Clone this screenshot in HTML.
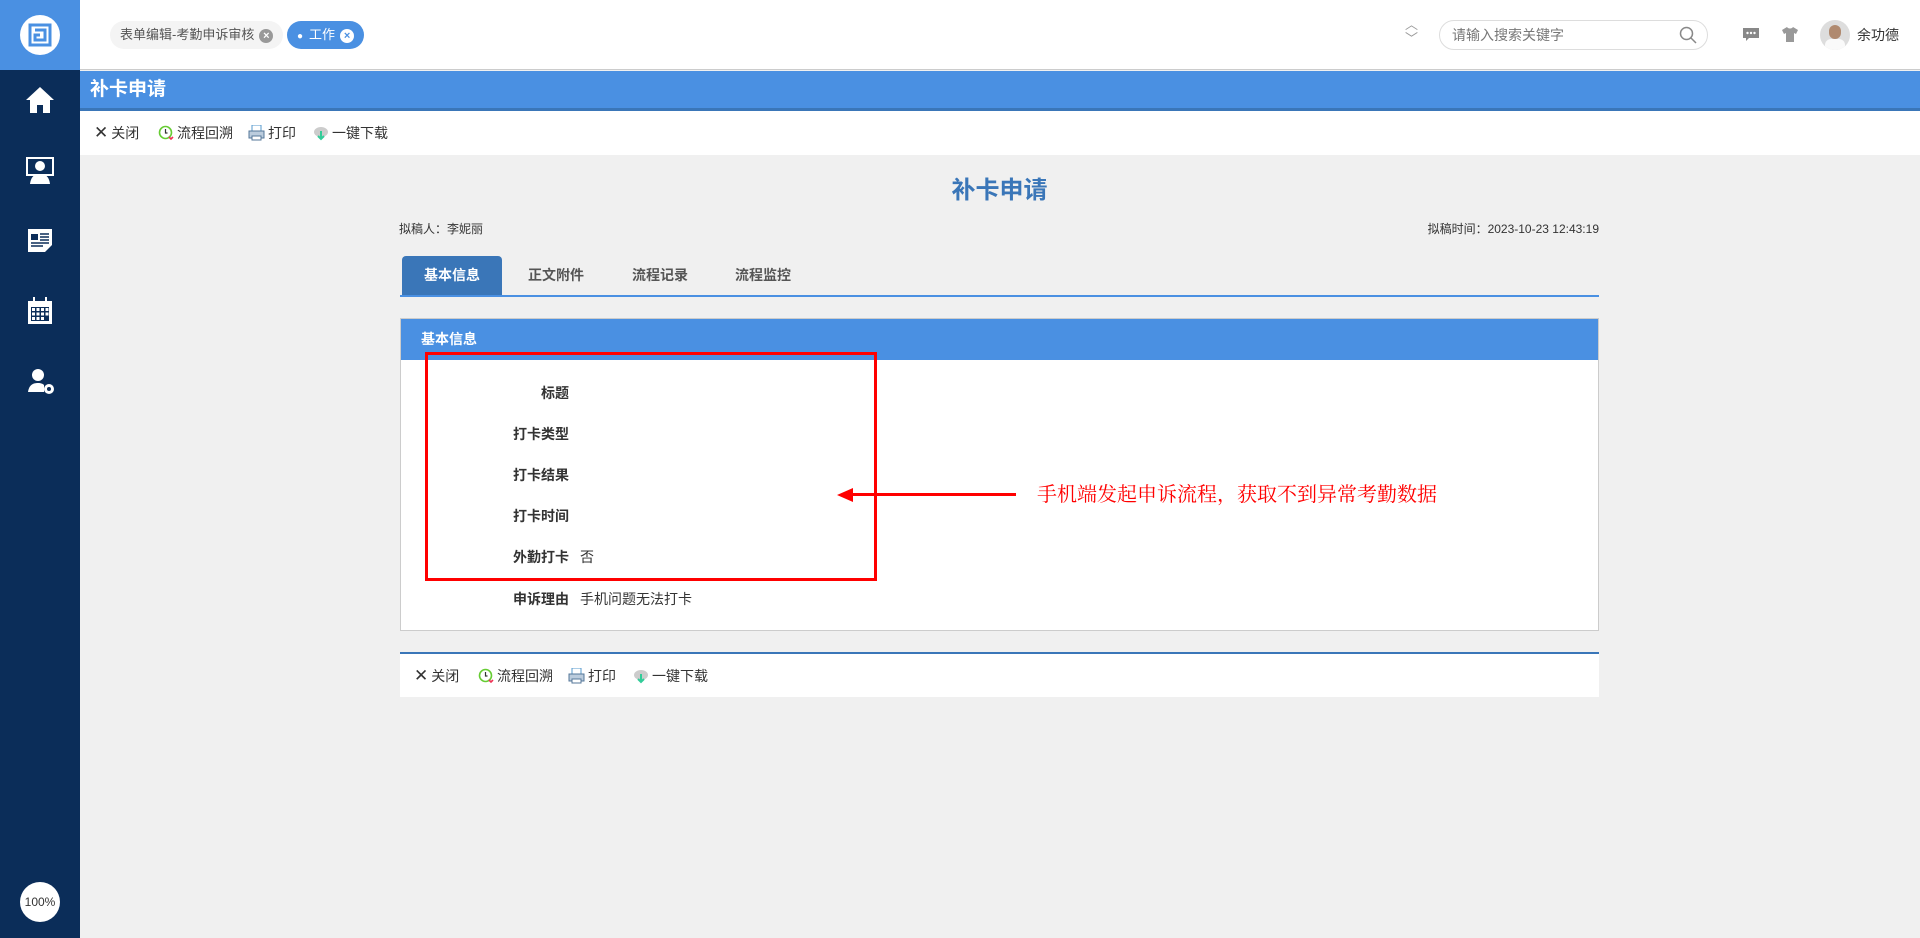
<!DOCTYPE html>
<html><head><meta charset="utf-8"><style>
*{box-sizing:border-box;margin:0;padding:0}
body{width:1920px;height:938px;overflow:hidden;background:#f0f0f0;font-family:"Liberation Sans","Noto Sans CJK SC",sans-serif;color:#333;position:relative}
.abs{position:absolute}
#side{left:0;top:0;width:80px;height:938px;background:#0b2d59}
#logo{left:0;top:0;width:80px;height:70px;background:#4a90e2}
#top{left:80px;top:0;width:1840px;height:70px;background:#fff;border-bottom:1px solid #ccc}
.chip{position:absolute;top:21px;height:28px;border-radius:14px;font-size:13px;line-height:28px;padding:0 10px;white-space:nowrap}
.x{display:inline-block;width:14px;height:14px;border-radius:7px;font-size:11px;line-height:14px;text-align:center;vertical-align:middle;margin-left:5px;font-weight:bold}
#bar{left:80px;top:71px;width:1840px;height:40px;background:#4a90e2;border-bottom:3px solid #3a76b8;color:#fff;font-weight:bold;font-size:19px;line-height:38px;padding-left:10px}
#tb{left:80px;top:111px;width:1840px;height:44px;background:#fff}
.tool{position:absolute;font-size:14px;line-height:20px;display:flex;align-items:center;gap:3px}
</style></head><body>
<div id="side" class="abs"></div>
<div id="logo" class="abs"><div class="abs" style="left:20px;top:15px;width:40px;height:40px;border-radius:20px;background:#fff"></div>
<svg class="abs" style="left:27px;top:22px" width="26" height="26" viewBox="0 0 26 26" fill="none" stroke="#4a90e2" stroke-width="3"><path d="M3 3h20v20H3z M8 8h10v10H8v-5h5"/></svg></div>
<svg class="abs" style="left:25px;top:86px" width="30" height="28" viewBox="0 0 30 28" fill="#fff"><path d="M15 1L1 14h4v13h7v-8h6v8h7V14h4z"/></svg>
<svg class="abs" style="left:26px;top:157px" width="28" height="27" viewBox="0 0 28 27" fill="#fff"><rect x="1" y="1" width="26" height="17" fill="none" stroke="#fff" stroke-width="2"/><circle cx="14" cy="9" r="5"/><path d="M4 27c1-8 5-10 10-10s9 2 10 10z"/></svg>
<svg class="abs" style="left:27px;top:227px" width="26" height="26" viewBox="0 0 26 26" fill="#fff"><path d="M1 2h24v16l-7 7H1z"/><rect x="4" y="7" width="7" height="6" fill="#0b2d59"/><path d="M13 7h9M13 10h9M13 13h9M4 16h18M4 19h12" stroke="#0b2d59" stroke-width="1.5"/></svg>
<svg class="abs" style="left:27px;top:297px" width="26" height="27" viewBox="0 0 26 27" fill="#fff"><path d="M1 4h24v23H1z"/><rect x="6" y="0" width="2" height="6"/><rect x="18" y="0" width="2" height="6"/><g fill="#0b2d59"><rect x="4" y="10" width="18" height="14"/></g><g fill="#fff"><rect x="5" y="11" width="3" height="3"/><rect x="9.5" y="11" width="3" height="3"/><rect x="14" y="11" width="3" height="3"/><rect x="18.5" y="11" width="3" height="3"/><rect x="5" y="15.5" width="3" height="3"/><rect x="9.5" y="15.5" width="3" height="3"/><rect x="14" y="15.5" width="3" height="3"/><rect x="18.5" y="15.5" width="3" height="3"/><rect x="5" y="20" width="3" height="3"/><rect x="9.5" y="20" width="3" height="3"/><rect x="14" y="20" width="3" height="3"/></g></svg>
<svg class="abs" style="left:28px;top:368px" width="28" height="28" viewBox="0 0 28 28" fill="#fff"><circle cx="10" cy="7" r="6"/><path d="M0 24c1-7 5-9 10-9 3 0 5 1 6 2v7z"/><circle cx="21" cy="21" r="5"/><circle cx="21" cy="21" r="2" fill="#0b2d59"/></svg>
<div class="abs" style="left:20px;top:882px;width:40px;height:40px;border-radius:20px;background:#fff;font-size:12px;line-height:40px;text-align:center;color:#333">100%</div>

<div id="top" class="abs">
<div class="chip" style="left:30px;background:#f4f4f4;color:#555">表单编辑-考勤申诉审核<span class="x" style="background:#999;color:#fff">×</span></div>
<div class="chip" style="left:207px;background:#4a90e2;color:#fff"><span style="font-size:10px;margin-right:6px">●</span>工作<span class="x" style="background:#fff;color:#4a90e2">×</span></div>
<div class="abs" style="left:1325px;top:18px;color:#999;font-size:13px;line-height:14px;text-align:center">︿<br>﹀</div>
<div class="abs" style="left:1359px;top:20px;width:269px;height:30px;border:1px solid #ddd;border-radius:15px;font-size:14px;line-height:28px;padding-left:12px;color:#777">请输入搜索关键字
<svg class="abs" style="right:10px;top:5px" width="18" height="18" viewBox="0 0 18 18" fill="none" stroke="#888" stroke-width="1.5"><circle cx="7.5" cy="7.5" r="6"/><path d="M12 12l5 5"/></svg></div>
<svg class="abs" style="left:1663px;top:28px" width="16" height="13" viewBox="0 0 16 13" fill="#888"><path d="M0 0h16v10H6l-3 3v-3H0z"/><g fill="#fff"><circle cx="4.5" cy="5" r="1.2"/><circle cx="8" cy="5" r="1.2"/><circle cx="11.5" cy="5" r="1.2"/></g></svg>
<svg class="abs" style="left:1702px;top:27px" width="16" height="15" viewBox="0 0 16 15" fill="#999"><path d="M5 0L0 3l2 4 2-1v9h8V6l2 1 2-4-5-3c-1 2-5 2-6 0z"/></svg>
<div class="abs" style="left:1740px;top:20px;width:30px;height:30px;border-radius:15px;background:#ddd;overflow:hidden"><div class="abs" style="left:9px;top:5px;width:12px;height:14px;border-radius:6px;background:#b08a70"></div><div class="abs" style="left:5px;top:19px;width:20px;height:14px;border-radius:6px;background:#fafafa"></div></div>
<div class="abs" style="left:1777px;top:25px;font-size:14px;color:#333">余功德</div>
</div>

<div id="bar" class="abs">补卡申请</div>
<div id="tb" class="abs">
<div class="tool" style="left:14px;top:12px"><span style="font-size:17px">✕</span>关闭</div>
<div class="tool" style="left:78px;top:12px"><svg width="16" height="16" viewBox="0 0 16 16" fill="none"><circle cx="7.5" cy="7.5" r="6" stroke="#6c3" stroke-width="1.6"/><path d="M7.5 4v4h2" stroke="#333" stroke-width="1.2"/><path d="M11 12l2 2 2-2" stroke="#e35" stroke-width="1.6"/></svg>流程回溯</div>
<div class="tool" style="left:168px;top:12px"><svg width="17" height="16" viewBox="0 0 17 16"><rect x="4" y="0" width="9" height="7" fill="#fff" stroke="#59c"/><rect x="1" y="6" width="15" height="7" fill="#bcd" stroke="#579"/><rect x="4" y="11" width="9" height="4" fill="#fff" stroke="#579"/></svg>打印</div>
<div class="tool" style="left:233px;top:12px"><svg width="16" height="16" viewBox="0 0 16 16"><ellipse cx="8" cy="7" rx="7" ry="5" fill="#ccc"/><path d="M8 6v8M5 11l3 3 3-3" stroke="#3c9" stroke-width="2" fill="none"/></svg>一键下载</div>
</div>

<div class="abs" style="left:400px;top:170px;width:1199px;text-align:center;font-size:24px;font-weight:bold;color:#3a76b8">补卡申请</div>
<div class="abs" style="left:399px;top:220px;font-size:12px">拟稿人：李妮丽</div>
<div class="abs" style="left:1399px;top:220px;width:200px;text-align:right;font-size:12px">拟稿时间：2023-10-23 12:43:19</div>

<div class="abs" style="left:402px;top:256px;width:100px;height:39px;background:#3a76b8;border-radius:4px 4px 0 0;color:#fff;font-weight:bold;font-size:14px;line-height:39px;text-align:center">基本信息</div>
<div class="abs" style="left:528px;top:256px;font-size:14px;line-height:39px;color:#555;font-weight:bold">正文附件</div>
<div class="abs" style="left:632px;top:256px;font-size:14px;line-height:39px;color:#555;font-weight:bold">流程记录</div>
<div class="abs" style="left:735px;top:256px;font-size:14px;line-height:39px;color:#555;font-weight:bold">流程监控</div>
<div class="abs" style="left:400px;top:295px;width:1199px;height:2px;background:#4a90e2"></div>

<div class="abs" style="left:400px;top:318px;width:1199px;height:313px;background:#fff;border:1px solid #ccc">
<div style="height:41px;background:#4a90e2;color:#fff;font-weight:bold;font-size:14px;line-height:40px;padding-left:20px">基本信息</div>
</div>
<div class="abs" style="left:0;top:383px;width:569px;font-weight:bold;font-size:14px;text-align:right">标题</div>
<div class="abs" style="left:0;top:424px;width:569px;font-weight:bold;font-size:14px;text-align:right">打卡类型</div>
<div class="abs" style="left:0;top:465px;width:569px;font-weight:bold;font-size:14px;text-align:right">打卡结果</div>
<div class="abs" style="left:0;top:506px;width:569px;font-weight:bold;font-size:14px;text-align:right">打卡时间</div>
<div class="abs" style="left:0;top:547px;width:569px;font-weight:bold;font-size:14px;text-align:right">外勤打卡</div>
<div class="abs" style="left:580px;top:547px;font-size:14px">否</div>
<div class="abs" style="left:0;top:589px;width:569px;font-weight:bold;font-size:14px;text-align:right">申诉理由</div>
<div class="abs" style="left:580px;top:589px;font-size:14px">手机问题无法打卡</div>

<div class="abs" style="left:425px;top:352px;width:452px;height:229px;border:3px solid #f00"></div>
<div class="abs" style="left:850px;top:493px;width:166px;height:3px;background:#f00"></div>
<div class="abs" style="left:837px;top:488px;width:0;height:0;border-top:7px solid transparent;border-bottom:7px solid transparent;border-right:16px solid #f00"></div>
<div class="abs" style="left:1037px;top:478px;font-family:'Liberation Serif','Noto Serif CJK SC',serif;font-size:20px;color:#f00;white-space:nowrap">手机端发起申诉流程，获取不到异常考勤数据</div>

<div class="abs" style="left:400px;top:652px;width:1199px;height:45px;background:#fff;border-top:2px solid #3a76b8">
<div class="tool" style="left:14px;top:12px"><span style="font-size:17px">✕</span>关闭</div>
<div class="tool" style="left:78px;top:12px"><svg width="16" height="16" viewBox="0 0 16 16" fill="none"><circle cx="7.5" cy="7.5" r="6" stroke="#6c3" stroke-width="1.6"/><path d="M7.5 4v4h2" stroke="#333" stroke-width="1.2"/><path d="M11 12l2 2 2-2" stroke="#e35" stroke-width="1.6"/></svg>流程回溯</div>
<div class="tool" style="left:168px;top:12px"><svg width="17" height="16" viewBox="0 0 17 16"><rect x="4" y="0" width="9" height="7" fill="#fff" stroke="#59c"/><rect x="1" y="6" width="15" height="7" fill="#bcd" stroke="#579"/><rect x="4" y="11" width="9" height="4" fill="#fff" stroke="#579"/></svg>打印</div>
<div class="tool" style="left:233px;top:12px"><svg width="16" height="16" viewBox="0 0 16 16"><ellipse cx="8" cy="7" rx="7" ry="5" fill="#ccc"/><path d="M8 6v8M5 11l3 3 3-3" stroke="#3c9" stroke-width="2" fill="none"/></svg>一键下载</div>
</div>
</body></html>
